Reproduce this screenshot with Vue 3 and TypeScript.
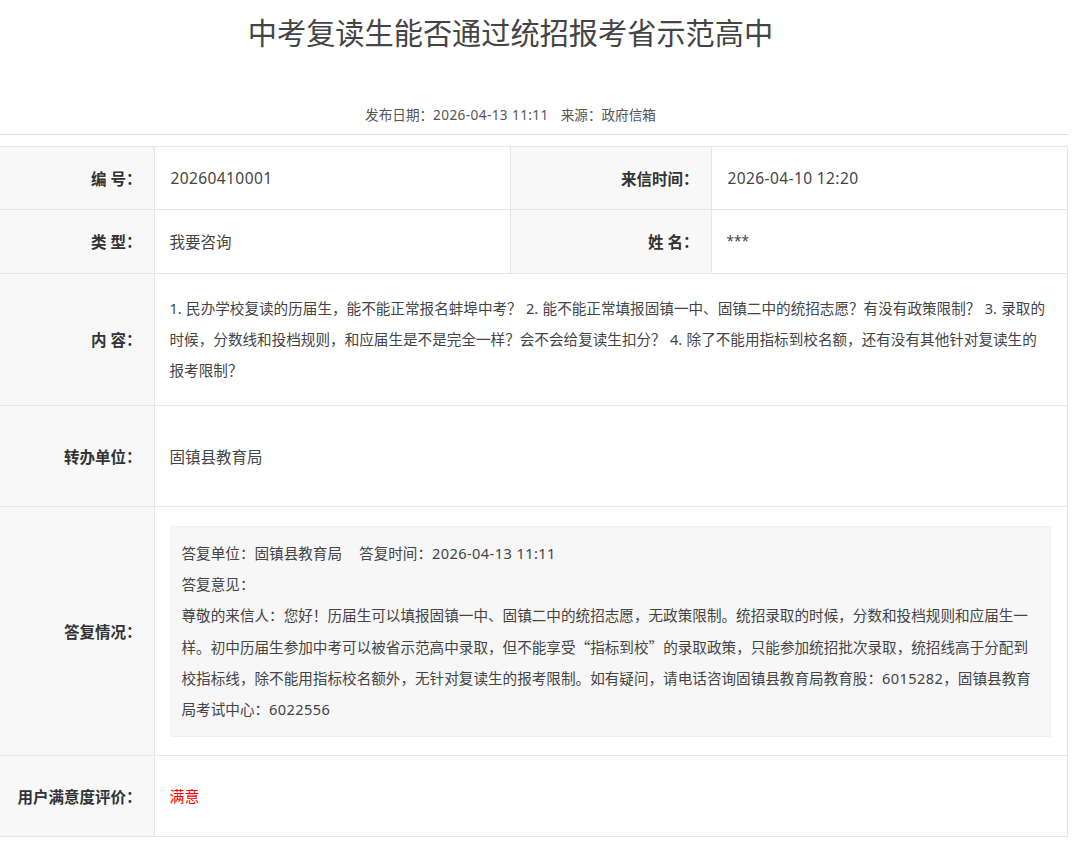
<script setup lang="ts">
const title = '中考复读生能否通过统招报考省示范高中'
const content = '1. 民办学校复读的历届生，能不能正常报名蚌埠中考？ 2. 能不能正常填报固镇一中、固镇二中的统招志愿？有没有政策限制？ 3. 录取的时候，分数线和投档规则，和应届生是不是完全一样？会不会给复读生扣分？ 4. 除了不能用指标到校名额，还有没有其他针对复读生的报考限制？'
</script>

<template>
  <div class="page">
    <div class="head">
      <h1 class="title">{{ title }}</h1>
      <div class="meta">
        <span>发布日期：<span class="num">2026-04-13 11:11</span></span>
        <span>来源：政府信箱</span>
      </div>
    </div>

    <table class="detail">
      <colgroup>
        <col class="c1" />
        <col class="c2" />
        <col class="c3" />
        <col class="c4" />
      </colgroup>
      <tbody>
        <tr class="r1">
          <th>编 号：</th>
          <td class="plain"><span class="num">20260410001</span></td>
          <th>来信时间：</th>
          <td class="plain"><span class="num">2026-04-10 12:20</span></td>
        </tr>
        <tr class="r2">
          <th>类 型：</th>
          <td class="plain">我要咨询</td>
          <th>姓 名：</th>
          <td class="plain"><span class="mask">***</span></td>
        </tr>
        <tr class="r3">
          <th>内 容：</th>
          <td colspan="3" class="long">{{ content }}</td>
        </tr>
        <tr class="r4">
          <th>转办单位：</th>
          <td colspan="3" class="plain">固镇县教育局</td>
        </tr>
        <tr class="r5">
          <th>答复情况：</th>
          <td colspan="3">
            <div class="reply">
              <p><span class="unit">答复单位：固镇县教育局</span>答复时间：<span class="num">2026-04-13 11:11</span></p>
              <p>答复意见：</p>
              <p>尊敬的来信人：您好！历届生可以填报固镇一中、固镇二中的统招志愿，无政策限制。统招录取的时候，分数和投档规则和应届生一样。初中历届生参加中考可以被省示范高中录取，但不能享受<span class="cjk">“</span>指标到校<span class="cjk">”</span>的录取政策，只能参加统招批次录取，统招线高于分配到校指标线，除不能用指标校名额外，无针对复读生的报考限制。如有疑问，请电话咨询固镇县教育局教育股：<span class="num">6015282</span>，固镇县教育局考试中心：<span class="num">6022556</span></p>
            </div>
          </td>
        </tr>
        <tr class="r6">
          <th>用户满意度评价：</th>
          <td colspan="3"><span class="good">满意</span></td>
        </tr>
      </tbody>
    </table>
  </div>
</template>

<style scoped>
.page {
  width: 1068px;
  font-family: "Noto Sans", "Noto Sans CJK SC", sans-serif;
  color: #333;
}

.head {
  height: 135px;
  box-sizing: border-box;
  border-bottom: 1px solid #ddd;
}

.title {
  width: 1021px;
  margin: 0;
  padding-top: 11px;
  height: 86px;
  box-sizing: border-box;
  text-align: center;
  font-size: 29.2px;
  line-height: 44px;
  font-weight: 400;
  color: #444;
}

.meta {
  width: 1021px;
  margin-top: 19px;
  display: flex;
  justify-content: center;
  gap: 12px;
  font-size: 13.6px;
  line-height: 20px;
  color: #555;
}

.num {
  letter-spacing: 0.4px;
}

.detail {
  width: 1067px;
  margin-top: 11px;
  table-layout: fixed;
  border-collapse: collapse;
  font-size: 15px;
}

.c1 { width: 154px; }
.c2 { width: 356px; }
.c3 { width: 201px; }
.c4 { width: 356px; }

.r1 { height: 63px; }
.r2 { height: 64px; }
.r3 { height: 132px; }
.r4 { height: 101px; }
.r5 { height: 249px; }
.r6 { height: 81px; }

th,
td {
  border: 1px solid #e6e6e6;
  box-sizing: border-box;
}

th:first-child {
  border-left: none;
}

th {
  padding: 0 12px 0 0;
  background: #f8f8f8;
  text-align: right;
  font-weight: 700;
  font-size: 15.5px;
  color: #333;
}

td {
  padding: 0 16px 0 15px;
  line-height: 31px;
  color: #444;
}

.plain {
  font-size: 15.5px;
}

.plain .num {
  margin-left: 1px;
}

.r2 .plain,
.r4 .plain {
  padding-top: 2px;
}

.long {
  padding-right: 18px;
  font-size: 14.6px;
  word-spacing: 0.5px;
}

.mask {
  font-size: 13.5px;
  position: relative;
  top: -2px;
}

.reply {
  padding: 11px;
  background: #f7f7f7;
  border: 1px solid #f1f1f1;
  font-size: 14.6px;
  line-height: 31px;
}

.reply p {
  margin: 0;
}

.cjk {
  font-family: "Noto Sans CJK SC", sans-serif;
}

.unit {
  margin-right: 17px;
}

.good {
  color: #f00;
}
</style>
